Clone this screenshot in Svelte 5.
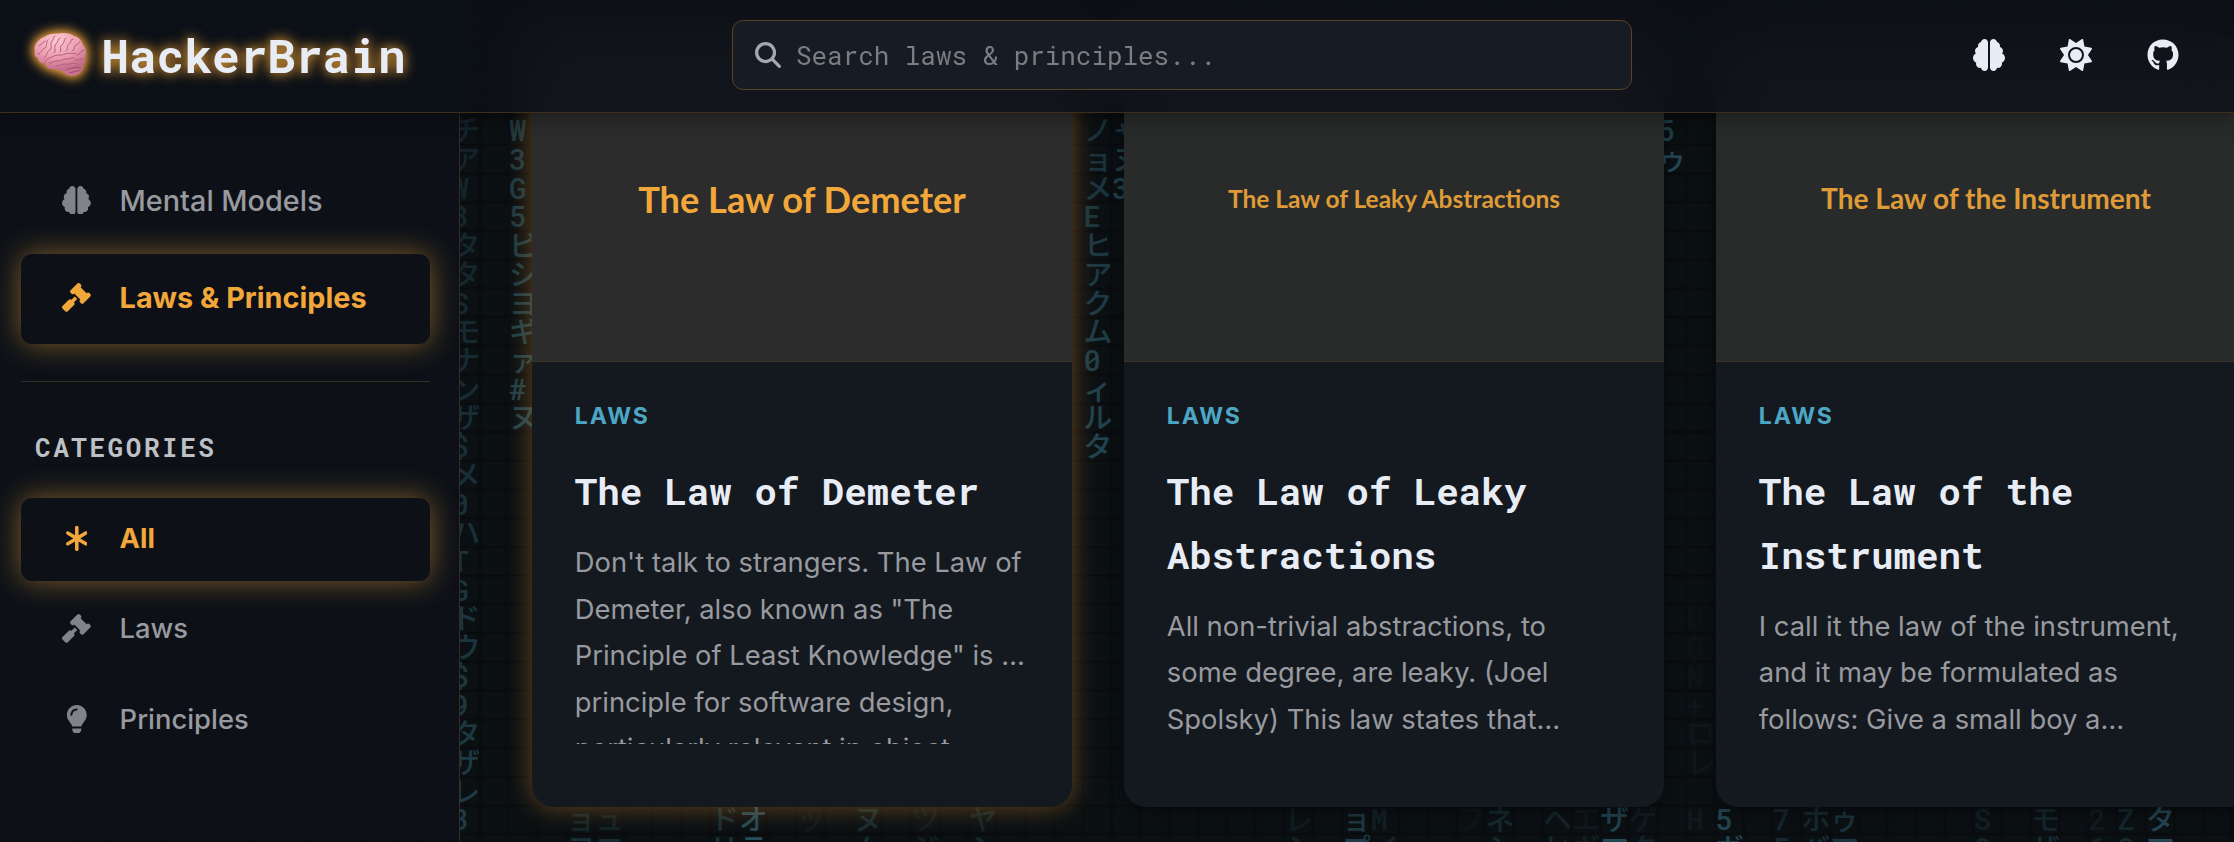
<script>
  const icons = {
    brain: { w: 512, d: 'M184 0c30.9 0 56 25.1 56 56V456c0 30.9-25.1 56-56 56c-28.9 0-52.7-21.9-55.7-50.1c-5.2 1.4-10.7 2.1-16.3 2.1c-35.3 0-64-28.7-64-64c0-7.4 1.3-14.6 3.6-21.2C21.4 367.4 0 338.2 0 304c0-31.9 18.7-59.5 45.8-72.3C37.1 220.8 32 207 32 192c0-30.7 21.6-56.3 50.4-62.6C80.8 123.9 80 118 80 112c0-29.9 20.6-55.1 48.3-62.1C131.3 21.9 155.1 0 184 0zM328 0c28.9 0 52.6 21.9 55.7 49.9c27.8 7 48.3 32.1 48.3 62.1c0 6-.8 11.9-2.4 17.4c28.8 6.2 50.4 31.9 50.4 62.6c0 15-5.1 28.8-13.8 39.7C493.3 244.5 512 272.1 512 304c0 34.2-21.4 63.4-51.6 74.8c2.3 6.6 3.6 13.8 3.6 21.2c0 35.3-28.7 64-64 64c-5.6 0-11.1-.7-16.3-2.1c-3 28.2-26.8 50.1-55.7 50.1c-30.9 0-56-25.1-56-56V56c0-30.9 25.1-56 56-56z' },
    sun: { w: 512, d: 'M361.5 1.2c5 2.1 8.6 6.6 9.6 11.9L391 121l107.9 19.8c5.3 1 9.8 4.6 11.9 9.6s1.5 10.7-1.6 15.2L446.9 256l62.3 90.3c3.1 4.5 3.7 10.2 1.6 15.2s-6.6 8.6-11.9 9.6L391 391 371.1 498.9c-1 5.3-4.6 9.8-9.6 11.9s-10.7 1.5-15.2-1.6L256 446.9l-90.3 62.3c-4.5 3.1-10.2 3.7-15.2 1.6s-8.6-6.6-9.6-11.9L121 391 13.1 371.1c-5.3-1-9.8-4.6-11.9-9.6s-1.5-10.7 1.6-15.2L65.1 256 2.8 165.7c-3.1-4.5-3.7-10.2-1.6-15.2s6.6-8.6 11.9-9.6L121 121 140.9 13.1c1-5.3 4.6-9.8 9.6-11.9s10.7-1.5 15.2 1.6L256 65.1 346.3 2.8c4.5-3.1 10.2-3.7 15.2-1.6zM160 256a96 96 0 1 1 192 0 96 96 0 1 1 -192 0zm224 0a128 128 0 1 0 -256 0 128 128 0 1 0 256 0z' },
    github: { w: 496, d: 'M165.9 397.4c0 2-2.3 3.6-5.2 3.6-3.3.3-5.6-1.3-5.6-3.6 0-2 2.3-3.6 5.2-3.6 3-.3 5.6 1.3 5.6 3.6zm-31.1-4.5c-.7 2 1.3 4.3 4.3 4.9 2.6 1 5.6 0 6.2-2s-1.3-4.3-4.3-5.2c-2.6-.7-5.5.3-6.2 2.3zm44.2-1.7c-2.9.7-4.9 2.6-4.6 4.9.3 2 2.9 3.3 5.9 2.6 2.9-.7 4.9-2.6 4.6-4.6-.3-1.9-3-3.2-5.9-2.9zM244.8 8C106.1 8 0 113.3 0 252c0 110.9 69.8 205.8 169.5 239.2 12.8 2.3 17.3-5.6 17.3-12.1 0-6.2-.3-40.4-.3-61.4 0 0-70 15-84.7-29.8 0 0-11.4-29.1-27.8-36.6 0 0-22.9-15.7 1.6-15.4 0 0 24.9 2 38.6 25.8 21.9 38.6 58.6 27.5 72.9 20.9 2.3-16 8.8-27.1 16-33.7-55.9-6.2-112.3-14.3-112.3-110.5 0-27.5 7.6-41.3 23.6-58.9-2.6-6.5-11.1-33.3 2.6-67.9 20.9-6.5 69 27 69 27 20-5.6 41.5-8.5 62.8-8.5s42.8 2.9 62.8 8.5c0 0 48.1-33.6 69-27 13.7 34.7 5.2 61.4 2.6 67.9 16 17.7 25.8 31.5 25.8 58.9 0 96.5-58.9 104.2-114.8 110.5 9.2 7.9 17 22.9 17 46.4 0 33.7-.3 75.4-.3 83.6 0 6.5 4.6 14.4 17.3 12.1C428.2 457.8 496 362.9 496 252 496 113.3 383.5 8 244.8 8z' },
    gavel: { w: 512, d: 'M318.6 9.4c-12.5-12.5-32.8-12.5-45.3 0l-120 120c-12.5 12.5-12.5 32.8 0 45.3l16 16c12.5 12.5 32.8 12.5 45.3 0l4-4L325.4 293.4l-4 4c-12.5 12.5-12.5 32.8 0 45.3l16 16c12.5 12.5 32.8 12.5 45.3 0l120-120c12.5-12.5 12.5-32.8 0-45.3l-16-16c-12.5-12.5-32.8-12.5-45.3 0l-4 4L330.6 74.6l4-4c12.5-12.5 12.5-32.8 0-45.3l-16-16zm-152 288c-12.5-12.5-32.8-12.5-45.3 0l-112 112c-12.5 12.5-12.5 32.8 0 45.3l48 48c12.5 12.5 32.8 12.5 45.3 0l112-112c12.5-12.5 12.5-32.8 0-45.3l-1.4-1.4L272 285.3 226.7 240 168 298.7l-1.4-1.4z' },
    asterisk: { w: 384, d: 'M192 32c17.7 0 32 14.3 32 32V199.5l111.5-66.9c15.2-9.1 34.8-4.2 43.9 11s4.2 34.8-11 43.9L254.2 256l114.3 68.6c15.2 9.1 20.1 28.7 11 43.9s-28.7 20.1-43.9 11L224 312.5V448c0 17.7-14.3 32-32 32s-32-14.3-32-32V312.5L48.5 379.4c-15.2 9.1-34.8 4.2-43.9-11s-4.2-34.8 11-43.9L129.8 256 15.5 187.4c-15.2-9.1-20.1-28.7-11-43.9s28.7-20.1 43.9-11L160 199.5V64c0-17.7 14.3-32 32-32z' },
    bulb: { w: 384, d: 'M272 384c9.6-31.9 29.5-59.1 49.2-86.2c5.2-7.1 10.4-14.2 15.4-21.4c19.8-28.5 31.4-63 31.4-100.3C368 78.8 289.2 0 192 0S16 78.8 16 176c0 37.3 11.6 71.9 31.4 100.3c5 7.2 10.2 14.3 15.4 21.4c19.8 27.1 39.7 54.4 49.2 86.2H272zM192 512c44.2 0 80-35.8 80-80V416H112v16c0 44.2 35.8 80 80 80zM112 176c0 8.8-7.2 16-16 16s-16-7.2-16-16c0-61.9 50.1-112 112-112c8.8 0 16 7.2 16 16s-7.2 16-16 16c-44.2 0-80 35.8-80 80z' },
    search: { w: 512, d: 'M416 208c0 45.9-14.9 88.3-40 122.7L502.6 457.4c12.5 12.5 12.5 32.8 0 45.3s-32.8 12.5-45.3 0L330.7 376c-34.4 25.2-76.8 40-122.7 40C93.1 416 0 322.9 0 208S93.1 0 208 0S416 93.1 416 208zM208 352a144 144 0 1 0 0-288 144 144 0 1 0 0 288z' }
  };

  const sections = [
    { label: 'Mental Models', icon: 'brain', active: false },
    { label: 'Laws & Principles', icon: 'gavel', active: true }
  ];
  const categories = [
    { label: 'All', icon: 'asterisk', active: true },
    { label: 'Laws', icon: 'gavel', active: false },
    { label: 'Principles', icon: 'bulb', active: false }
  ];

  const cards = [
    {
      banner: 'The Law of Demeter', size: 36.2, hover: true,
      title: ['The Law of Demeter'],
      text: ["Don't talk to strangers. The Law of", 'Demeter, also known as "The', 'Principle of Least Knowledge" is …', 'principle for software design,', 'particularly relevant in object-']
    },
    {
      banner: 'The Law of Leaky Abstractions', size: 24.5, hover: false,
      title: ['The Law of Leaky', 'Abstractions'],
      text: ['All non-trivial abstractions, to', 'some degree, are leaky. (Joel', 'Spolsky) This law states that…']
    },
    {
      banner: 'The Law of the Instrument', size: 28.1, hover: false,
      title: ['The Law of the', 'Instrument'],
      text: ['I call it the law of the instrument,', 'and it may be formulated as', 'follows: Give a small boy a…']
    }
  ];

  // Rain streams: column index, first row, glyphs, opacity at head and tail.
  const STEP = 28.72;
  const streams = [
    [-2, 0, 'チアW3タタSモナンザ$メ0ハTGドウ$9タザレ3', 0.12, 0.28],
    [0, 0, 'W3G5ビシヨギァ#ヌ', 0.25, 0.32],
    [20, -1, 'タノョメEヒアクム0ィルタ', 0.2, 0.34],
    [21, 0, 'ャヌ3', 0.26, 0.32],
    [40, 0, '5ゥ', 0.32, 0.36],
    [41, 17, 'UGN+ロレ', 0.02, 0.05],
    [2, 24, 'ョヨ', 0.14, 0.2], [3, 24, 'ュロ', 0.1, 0.16], [7, 24, 'ドリ', 0.18, 0.22], [8, 24, 'オラ', 0.36, 0.4],
    [10, 24, 'ッ', 0.05, 0.05], [12, 24, 'ヌム', 0.17, 0.2], [14, 24, 'ツジ', 0.06, 0.1], [16, 24, 'ヤシ', 0.12, 0.16],
    [27, 24, 'レシ', 0.08, 0.12], [29, 24, 'ョプ', 0.26, 0.28], [30, 24, 'Mイ', 0.1, 0.12], [33, 24, 'フ', 0.04, 0.04],
    [34, 24, 'ネシ', 0.16, 0.16], [36, 24, 'ヘヒ', 0.13, 0.16], [37, 24, 'エガ', 0.06, 0.1], [38, 24, 'ザマ', 0.33, 0.38],
    [39, 24, 'ゲタ', 0.08, 0.12], [41, 24, 'H', 0.06, 0.06], [42, 24, '5ガ', 0.34, 0.36], [44, 24, '75', 0.15, 0.16],
    [45, 24, 'ホバ', 0.16, 0.2], [46, 24, 'ゥマ', 0.22, 0.24], [51, 24, 'S8', 0.1, 0.14], [53, 24, 'モザ', 0.14, 0.18],
    [55, 24, '26', 0.08, 0.12], [56, 24, 'Z8', 0.15, 0.16], [57, 24, 'タマ', 0.34, 0.36]
  ];
  const glyphs = streams.flatMap(([col, row, text, a, b]) =>
    [...text].map((ch, i) => ({
      ch,
      x: 509 + col * STEP,
      y: 141.2 + (row + i) * STEP,
      o: a + ((b - a) * i) / Math.max(1, text.length - 1)
    }))
  );
</script>

{#snippet icon(name, cls)}
  <svg class="icon {cls}" viewBox="0 0 {icons[name].w} 512" aria-hidden="true"><path d={icons[name].d} /></svg>
{/snippet}

{#snippet link(item, cls)}
  <a class="item {cls}" class:active={item.active} href="#top">
    <span class="slot">{@render icon(item.icon, '')}</span>
    <span>{item.label}</span>
  </a>
{/snippet}

<div class="page">
  <svg class="rain" viewBox="0 0 2234 842" aria-hidden="true">
    <defs>
      <pattern id="cells" x="509" y="116.4" width="28.72" height="28.72" patternUnits="userSpaceOnUse">
        <rect width="28.72" height="28.72" fill="#0a0d10" />
        <rect x="1" y="1.6" width="26" height="25.6" rx="5" fill="#0b1013" />
        <rect x="0" y="27.6" width="28.72" height="1.2" fill="#080a0c" />
      </pattern>
    </defs>
    <rect width="2234" height="842" fill="url(#cells)" />
    {#each glyphs as g}
      <text x={g.x} y={g.y} opacity={g.o}>{g.ch}</text>
    {/each}
  </svg>

  <aside class="sidebar">
    <nav class="sections">
      {#each sections as s}{@render link(s, 'large')}{/each}
    </nav>
    <hr />
    <h2>CATEGORIES</h2>
    <nav class="cats">
      {#each categories as c}{@render link(c, 'small')}{/each}
    </nav>
  </aside>

  <main class="cards">
    {#each cards as card}
      <article class="card" class:hover={card.hover}>
        <div class="banner" style:font-size="{card.size}px"><span>{card.banner}</span></div>
        <div class="body">
          <span class="tag">LAWS</span>
          <h3>{#each card.title as line}<span>{line}</span>{/each}</h3>
          <p>{#each card.text as line}<span>{line}</span>{/each}</p>
        </div>
      </article>
    {/each}
  </main>

  <header class="header">
    <div class="brand">
      <svg class="logo" viewBox="0 0 52 43" aria-hidden="true">
        <defs>
          <radialGradient id="pink" cx=".42" cy=".18" r=".9">
            <stop offset="0" stop-color="#fbc9cf" />
            <stop offset=".5" stop-color="#ec9fb2" />
            <stop offset="1" stop-color="#b95f80" />
          </radialGradient>
        </defs>
        <path d="M27 35 C33 31 44 30 49 32 C50 38 45 42 39 43 C34 43 31 41 27 37Z" fill="#c9738f" />
        <path d="M1 19 C-1 13 4 6 10 4 C14 1 20 0 25 .5 C30-.5 36 0 40 3 C45 4 48 8 49 12 C52 15 53 20 51 24 C52 29 50 33 45 34 C41 36 35 35 32 36 C28 39 23 37 19 36 C14 37 11 33 11 30 C7 31 4 28 4 25 C1 24 0 22 1 19Z" fill="url(#pink)" />
        <g fill="none" stroke="#b45c7b" stroke-width="1" stroke-linecap="round">
          <path d="M11 30 C12 24 17 25 20 23 C24 21 28 23 31 21 C35 19 38 22 42 20" />
          <path d="M5 13 C8 12 8 9 11 8 M4 21 C8 21 7 16 11 15 C14 13 11 10 14 7" />
          <path d="M10 25 C14 22 12 19 16 17 C19 14 15 11 18 8 C20 6 19 4 21 3" />
          <path d="M20 20 C23 17 19 14 22 11 C25 9 23 6 26 5 M26 19 C28 16 25 14 28 12 C31 10 29 7 32 5" />
          <path d="M32 18 C35 16 32 13 35 11 C38 9 36 6 39 6 M38 18 C42 17 39 13 42 12 C44 12 44 9 46 9" />
          <path d="M43 22 C47 22 46 17 50 17 M41 27 C45 28 46 25 50 26" />
          <path d="M15 30 C19 31 20 27 24 28 C28 29 29 25 33 26 C36 27 37 24 40 25" />
          <path d="M22 33 C26 33 27 31 31 31 C36 32 38 29 43 31" />
        </g>
        <path d="M32 37 C36 35 42 34 48 35 M35 40 C39 39 43 38 47 37" fill="none" stroke="#974a68" stroke-width=".9" />
      </svg>
      <span class="name">HackerBrain</span>
    </div>
    <label class="search">
      {@render icon('search', 'lens')}
      <input type="text" placeholder="Search laws & principles..." />
    </label>
    <div class="actions">
      {@render icon('brain', 'act')}
      {@render icon('sun', 'act')}
      {@render icon('github', 'act')}
    </div>
  </header>
</div>

<style>
  :global(body) {
    background: #0a0d11;
  }
  * {
    box-sizing: border-box;
  }
  .page {
    position: relative;
    display: flex;
    width: 2234px;
    height: 842px;
    overflow: hidden;
    font-family: Inter, 'Noto Sans', sans-serif;
    --gold: #f2a73b;
    --mono: 'Roboto Mono', 'Liberation Mono', monospace;
  }
  .rain {
    position: absolute;
    inset: 0;
    width: 2234px;
    height: 842px;
  }
  .rain text {
    font: 500 28.8px 'Roboto Mono', 'Noto Sans CJK JP', monospace;
    fill: #50a9c6;
  }
  .icon {
    display: block;
    fill: currentColor;
  }

  .header {
    position: absolute;
    top: 0;
    left: 0;
    display: grid;
    grid-template-columns: 732px 900px 1fr;
    align-items: center;
    width: 2234px;
    height: 113px;
    padding-bottom: 3px;
    background: rgba(13, 17, 23, 0.85);
    backdrop-filter: blur(24px);
    border-bottom: 1px solid #3e2e1a;
    box-shadow: 0 4px 20px rgba(0, 0, 0, 0.4);
  }
  .brand {
    display: flex;
    align-items: center;
    gap: 15.5px;
    padding-left: 34px;
  }
  .logo {
    width: 52px;
    height: 43px;
    filter: drop-shadow(0 0 6px var(--gold)) drop-shadow(0 0 5px rgba(242, 167, 59, 0.7));
  }
  .name {
    font: 700 46.08px/60px var(--mono);
    color: #e8ecf4;
    text-shadow: 0 0 14px var(--gold), 0 0 10px rgba(242, 167, 59, 0.3);
  }
  .search {
    display: flex;
    align-items: center;
    gap: 15.5px;
    height: 70px;
    padding-left: 21.5px;
    background: #171b23;
    border: 1px solid #5a4223;
    border-radius: 11px;
  }
  .lens {
    width: 26px;
    height: 26px;
    color: #a5a8ae;
  }
  input {
    flex: 1;
    padding: 0;
    border: 0;
    outline: 0;
    background: none;
    font: 400 25.92px/40px var(--mono);
    color: #e8ecf4;
  }
  input::placeholder {
    color: #7a7d82;
    opacity: 1;
  }
  .actions {
    display: flex;
    justify-content: flex-end;
    gap: 55px;
    padding-right: 55.5px;
    color: #e8ecf4;
  }
  .act {
    width: 32px;
    height: 32px;
  }

  .sidebar {
    position: relative;
    flex: 0 0 460px;
    height: 841px;
    padding: 156px 29px 0 21px;
    background: #0d1117;
    border-right: 1px solid #352b1e;
  }
  .sections,
  .cats {
    display: flex;
    flex-direction: column;
    gap: 7.6px;
  }
  .cats {
    gap: 7.5px;
  }
  .item {
    display: flex;
    align-items: center;
    gap: 28.8px;
    padding: 0 41px 2px;
    border-radius: 11px;
    font-weight: 500;
    color: #989a9f;
    text-decoration: none;
    white-space: nowrap;
  }
  .large {
    height: 90px;
    font-size: 28.8px;
  }
  .small {
    height: 83px;
    padding-bottom: 2.4px;
    font-size: 27.36px;
  }
  .slot {
    display: flex;
    justify-content: center;
    width: 28.8px;
    color: #808388;
  }
  .slot .icon {
    height: 28.8px;
  }
  .active,
  .active .slot {
    color: var(--gold);
  }
  .active {
    font-weight: 700;
    background: #0d1117;
    box-shadow: 0 0 29px rgba(242, 167, 59, 0.5);
  }
  hr {
    height: 1px;
    margin: 37px 0 0;
    border: 0;
    background: #352b1e;
  }
  h2 {
    margin: 44px 0 29px 14px;
    font: 700 25.92px/43px var(--mono);
    letter-spacing: 2.6px;
    color: #bdc0c5;
  }

  .cards {
    position: relative;
    display: flex;
    gap: 52px;
    padding: 38px 0 35px 72px;
  }
  .card {
    display: flex;
    flex-direction: column;
    flex: 0 0 540px;
    height: 769px;
    overflow: hidden;
    border-radius: 22px;
    background: #141920;
    box-shadow: 0 4px 18px rgba(0, 0, 0, 0.4);
  }
  .hover {
    box-shadow: 0 0 26px rgba(242, 157, 49, 0.4);
  }
  .banner {
    display: flex;
    align-items: center;
    justify-content: center;
    height: 324px;
    padding-bottom: 2px;
    background: #292b2b;
    border-bottom: 1px solid #3b3226;
    font-family: Lato, sans-serif;
    font-weight: 700;
    line-height: 1.2;
    color: #de9b38;
  }
  .hover .banner {
    padding-bottom: 0;
    background: #2c2c2c;
    color: #f2a73b;
  }
  .body {
    display: flex;
    flex: 1;
    flex-direction: column;
    min-height: 0;
    padding: 35px 42.8px 63px;
  }
  .tag {
    font-size: 23.04px;
    font-weight: 700;
    line-height: 39px;
    letter-spacing: 1.9px;
    color: #4da6c4;
  }
  h3 {
    margin: 23px 0 16.5px;
    font: 700 37.44px/63.65px var(--mono);
    color: #e8ecf4;
  }
  h3 span,
  p span {
    display: block;
    white-space: nowrap;
  }
  p {
    flex: 1;
    min-height: 0;
    margin: 0;
    overflow: hidden;
    font-size: 27.36px;
    font-weight: 430;
    line-height: 46.5px;
    color: #989a9f;
  }
</style>
